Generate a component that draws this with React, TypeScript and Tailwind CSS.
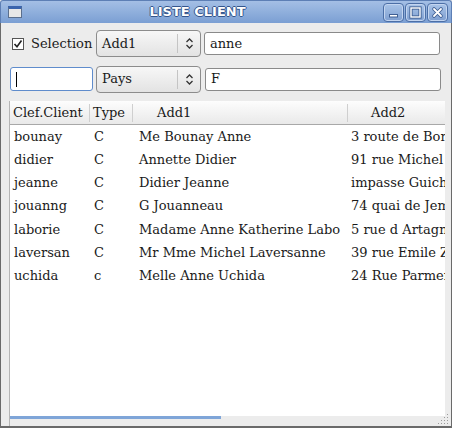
import React from "react";

const rows = [
  ["bounay", "C", "Me Bounay Anne", "3 route de Bonnefoy"],
  ["didier", "C", "Annette Didier", "91 rue Michel Ange"],
  ["jeanne", "C", "Didier Jeanne", "impasse Guichard"],
  ["jouanng", "C", "G Jouanneau", "74 quai de Jemmapes"],
  ["laborie", "C", "Madame Anne Katherine Labo", "5 rue d Artagnan"],
  ["laversan", "C", "Mr Mme Michel Laversanne", "39 rue Emile Zola"],
  ["uchida", "c", "Melle Anne Uchida", "24 Rue Parmentier"],
];

function TitleButton({ kind }: { kind: "min" | "max" | "close" }) {
  return (
    <div className="w-[21px] h-[19px] rounded-[4px] border border-[#4c6fa6] bg-gradient-to-b from-[#a9c4e8] to-[#7f9fd0] shadow-[inset_0_0_0_1px_#c3d5f0] flex items-center justify-center">
      <svg width="13" height="13" viewBox="0 0 13 13">
        {kind === "min" && (
          <rect x="2.5" y="8.5" width="8" height="2.5" fill="#fff" stroke="#3f5f93" strokeWidth="1" />
        )}
        {kind === "max" && (
          <>
            <rect x="2" y="2" width="9" height="9" fill="none" stroke="#3f5f93" strokeWidth="3.2" />
            <rect x="2" y="2" width="9" height="9" fill="none" stroke="#fff" strokeWidth="1.4" />
          </>
        )}
        {kind === "close" && (
          <>
            <path d="M3 3 L10 10 M10 3 L3 10" stroke="#3f5f93" strokeWidth="3.6" strokeLinecap="round" />
            <path d="M3 3 L10 10 M10 3 L3 10" stroke="#fff" strokeWidth="1.8" strokeLinecap="round" />
          </>
        )}
      </svg>
    </div>
  );
}

function Combo({ label }: { label: string }) {
  return (
    <div className="w-[105px] h-[27px] rounded-[4px] border border-[#8c8c8c] bg-gradient-to-b from-[#f7f7f7] to-[#e3e3e3] flex items-center">
      <span className="flex-1 pl-[5px] text-[13px] text-[#1a1a1a]">{label}</span>
      <div className="w-px h-[19px] bg-[#c4c4c4]" />
      <div className="w-[22px] flex items-center justify-center">
        <svg width="9" height="13" viewBox="0 0 9 13">
          <path d="M1.5 5 L4.5 2 L7.5 5" fill="none" stroke="#333" strokeWidth="1.3" />
          <path d="M1.5 8 L4.5 11 L7.5 8" fill="none" stroke="#333" strokeWidth="1.3" />
        </svg>
      </div>
    </div>
  );
}

export default function App() {
  return (
    <div
      className="w-[452px] h-[428px] flex flex-col bg-[#ececec] text-[13px] text-[#1a1a1a] overflow-hidden"
      style={{ fontFamily: '"DejaVu Serif", serif' }}
    >
      {/* Title bar */}
      <div className="h-[23px] shrink-0 flex items-center bg-gradient-to-b from-[#a4bfe5] to-[#7b9fd3] border-x border-t border-[#5d7fb5] rounded-t-[3px] relative">
        <div className="ml-[7px] w-[14px] h-[12px] border border-[#5b6f8d] bg-[#e8e8e8] border-t-[3px] border-t-[#3a64ad]" />
        <div
          className="flex-1 text-center text-white font-bold text-[13px] [text-shadow:1px_0_#34558c,-1px_0_#34558c,0_1px_#34558c,0_-1px_#34558c] -ml-[10px]"
          style={{ fontFamily: '"DejaVu Sans", sans-serif' }}
        >
          LISTE CLIENT
        </div>
        <div className="flex gap-px mr-[3px]">
          <TitleButton kind="min" />
          <TitleButton kind="max" />
          <TitleButton kind="close" />
        </div>
      </div>

      {/* Body */}
      <div className="flex-1 flex flex-col border-x border-b-2 border-[#6a6a6a] relative">
        {/* Row 1 */}
        <div className="mt-[7px] h-[27px] flex items-center">
          <div className="ml-[11px] w-[12px] h-[12px] border border-[#555] bg-white flex items-center justify-center">
            <svg width="10" height="10" viewBox="0 0 10 10">
              <path d="M1.5 5 L4 7.8 L8.5 1.5" fill="none" stroke="#222" strokeWidth="1.6" />
            </svg>
          </div>
          <span className="ml-[7px] w-[65px]">Selection</span>
          <Combo label="Add1" />
          <div className="ml-[3px] w-[236px] h-[23px] rounded-[3px] border border-[#8a8a8a] bg-white flex items-center pl-[5px]">
            anne
          </div>
        </div>

        {/* Row 2 */}
        <div className="mt-[8px] h-[28px] flex items-center">
          <div className="ml-[9px] w-[83px] h-[24px] rounded-[3px] border border-[#5f8ccc] bg-white flex items-center pl-[5px]">
            <div className="w-px h-[15px] bg-black" />
          </div>
          <div className="ml-[3px]">
            <Combo label="Pays" />
          </div>
          <div className="ml-[4px] w-[236px] h-[23px] rounded-[3px] border border-[#8a8a8a] bg-white flex items-center pl-[5px]">
            F
          </div>
        </div>

        {/* Table */}
        <div className="mt-[8px] ml-[8px] mr-[6px] flex-1 flex flex-col bg-white border-l border-[#b5b5b5] overflow-hidden">
          <div className="h-[24px] shrink-0 flex items-center bg-gradient-to-b from-[#fdfdfd] to-[#e9e9e9] border-b border-[#a8a8a8] whitespace-nowrap">
            <div className="w-[80px] shrink-0 pl-[3px] border-r border-[#cfcfcf] h-[18px] flex items-center">Clef.Client</div>
            <div className="w-[43px] shrink-0 pl-[3px] border-r border-[#cfcfcf] h-[18px] flex items-center">Type</div>
            <div className="w-[215px] shrink-0 pl-[24px] border-r border-[#cfcfcf] h-[18px] flex items-center">Add1</div>
            <div className="pl-[23px] h-[18px] flex items-center">Add2</div>
          </div>
          <div className="flex-1 flex flex-col">
            {rows.map((r) => (
              <div key={r[0]} className="h-[23.2px] shrink-0 flex items-center whitespace-nowrap">
                <div className="w-[80px] shrink-0 pl-[4px]">{r[0]}</div>
                <div className="w-[43px] shrink-0 pl-[4px]">{r[1]}</div>
                <div className="w-[215px] shrink-0 pl-[6px] overflow-hidden">{r[2]}</div>
                <div className="pl-[3px]">{r[3]}</div>
              </div>
            ))}
          </div>
          <div className="h-[3px] shrink-0 bg-[#ececec]">
            <div className="h-[3px] w-[211px] bg-[#7fa5d8]" />
          </div>
          <div className="h-[7px] shrink-0 bg-[#ececec] -ml-px" />
        </div>

        {/* resize grip */}
        <svg className="absolute right-[2px] bottom-[1px]" width="12" height="12" viewBox="0 0 12 12">
          {[
            [10, 2],
            [7, 5],
            [10, 5],
            [4, 8],
            [7, 8],
            [10, 8],
            [1, 11],
            [4, 11],
            [7, 11],
            [10, 11],
          ].map(([x, y], i) => (
            <rect key={i} x={x} y={y - 1} width="1" height="1" fill="#9a9a9a" />
          ))}
        </svg>
      </div>
    </div>
  );
}
